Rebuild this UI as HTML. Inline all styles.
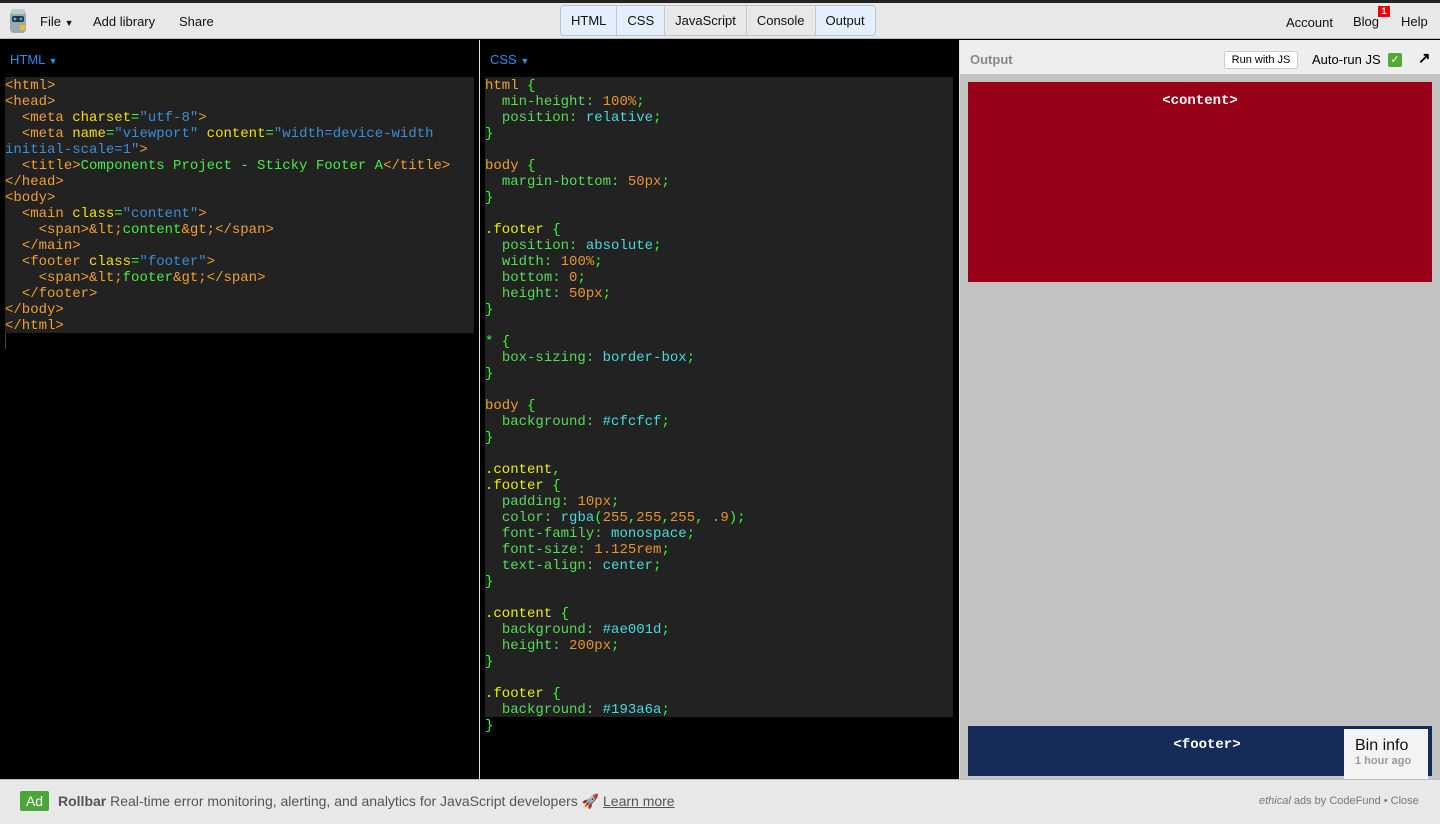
<!DOCTYPE html>
<html><head><meta charset="utf-8">
<style>
*{box-sizing:border-box;margin:0;padding:0}
body{width:1440px;height:824px;overflow:hidden;background:#000;font-family:"Liberation Sans",sans-serif;position:relative}
.top{position:absolute;left:0;top:0;width:1440px;height:3px;background:#222}
.bar{position:absolute;left:0;top:3px;width:1440px;height:36px;background:#e8e8e8;border-bottom:1px solid #bbb;font-size:13px;color:#111}
.bar span{position:absolute;top:11px}
.tabs{position:absolute;left:560px;top:2px;height:31px;display:flex;border:1px solid #bcc4d0;border-radius:4px;overflow:hidden;background:#e8e8e8}
.tabs div{padding:0 10px;line-height:30px;border-right:1px solid #c8c8c8;font-size:13px}
.tabs div.on{background:#e4eefc}
.tabs div:last-child{border-right:none}
.panel{position:absolute;top:40px;height:739px;background:#000}
.lbl{position:absolute;left:10px;top:12px;color:#2d8ef0;font-size:13px}
.code{position:absolute;left:5px;top:37px;background:#222;font-family:"Liberation Mono",monospace;font-size:14px;line-height:16px;white-space:pre;padding-top:1px;color:#4e4}
.t{color:#f0a030}.a{color:#f2e200}.s{color:#3a8fd5}.x{color:#4e4}
.p{color:#5d5}.v{color:#4dd}.n{color:#e9952c}.sel{color:#ee0}.b{color:#3f3}
.out{position:absolute;left:960px;top:40px;width:480px;height:739px;background:#c3c3c3}
.ohead{position:absolute;left:0;top:0;width:480px;height:34px;background:#eee;font-size:13px}
.ad{position:absolute;left:0;top:779px;width:1440px;height:45px;background:#e8e8e8;border-top:1px solid #bbb;font-size:14px;color:#555}
</style></head><body>
<div class="top"></div>
<div class="bar">
<svg style="position:absolute;left:9px;top:5px" width="18" height="26" viewBox="0 0 18 26"><rect x="1" y="3" width="16" height="22" rx="4" fill="#9aa"/><rect x="2" y="1" width="14" height="5" rx="2" fill="#bcc"/><rect x="3" y="8" width="12" height="6" rx="2" fill="#234"/><circle cx="6" cy="11" r="1.5" fill="#4af"/><circle cx="12" cy="11" r="1.5" fill="#4af"/><rect x="11" y="17" width="5" height="5" fill="#eb3"/></svg>
<span style="left:40px">File <small style="font-size:9px">▼</small></span>
<span style="left:93px">Add library</span>
<span style="left:179px">Share</span>
<div class="tabs"><div class="on">HTML</div><div class="on">CSS</div><div>JavaScript</div><div>Console</div><div class="on">Output</div></div>
<span style="left:1286px;top:12px">Account</span>
<span style="left:1353px">Blog</span>
<div style="position:absolute;left:1378px;top:3px;width:12px;height:11px;background:#e00;color:#fff;font-size:9px;font-weight:bold;text-align:center;line-height:11px">1</div>
<span style="left:1401px">Help</span>
</div>

<div class="panel" style="left:0;width:479px">
<div class="lbl">HTML <small style="font-size:9px">▼</small></div>
<div class="code" style="width:469px;height:256px"><span class="t">&lt;html&gt;</span>
<span class="t">&lt;head&gt;</span>
  <span class="t">&lt;meta</span> <span class="a">charset</span><span class="x">=</span><span class="s">"utf-8"</span><span class="t">&gt;</span>
  <span class="t">&lt;meta</span> <span class="a">name</span><span class="x">=</span><span class="s">"viewport"</span> <span class="a">content</span><span class="x">=</span><span class="s">"width=device-width</span>
<span class="s">initial-scale=1"</span><span class="t">&gt;</span>
  <span class="t">&lt;title&gt;</span>Components Project - Sticky Footer A<span class="t">&lt;/title&gt;</span>
<span class="t">&lt;/head&gt;</span>
<span class="t">&lt;body&gt;</span>
  <span class="t">&lt;main</span> <span class="a">class</span><span class="x">=</span><span class="s">"content"</span><span class="t">&gt;</span>
    <span class="t">&lt;span&gt;</span><span class="t">&amp;lt;</span>content<span class="t">&amp;gt;</span><span class="t">&lt;/span&gt;</span>
  <span class="t">&lt;/main&gt;</span>
  <span class="t">&lt;footer</span> <span class="a">class</span><span class="x">=</span><span class="s">"footer"</span><span class="t">&gt;</span>
    <span class="t">&lt;span&gt;</span><span class="t">&amp;lt;</span>footer<span class="t">&amp;gt;</span><span class="t">&lt;/span&gt;</span>
  <span class="t">&lt;/footer&gt;</span>
<span class="t">&lt;/body&gt;</span>
<span class="t">&lt;/html&gt;</span></div>
<div style="position:absolute;left:5px;top:293px;width:1px;height:16px;background:#444"></div>
</div>
<div style="position:absolute;left:479px;top:40px;width:1px;height:739px;background:#ddd"></div>
<div class="panel" style="left:480px;width:479px">
<div class="lbl">CSS <small style="font-size:9px">▼</small></div>
<div class="code" style="width:468px;height:640px"><span class="t">html</span> <span class="b">{</span>
  <span class="p">min-height:</span> <span class="n">100%</span><span class="b">;</span>
  <span class="p">position:</span> <span class="v">relative</span><span class="b">;</span>
<span class="b">}</span>

<span class="t">body</span> <span class="b">{</span>
  <span class="p">margin-bottom:</span> <span class="n">50px</span><span class="b">;</span>
<span class="b">}</span>

<span class="sel">.footer</span> <span class="b">{</span>
  <span class="p">position:</span> <span class="v">absolute</span><span class="b">;</span>
  <span class="p">width:</span> <span class="n">100%</span><span class="b">;</span>
  <span class="p">bottom:</span> <span class="n">0</span><span class="b">;</span>
  <span class="p">height:</span> <span class="n">50px</span><span class="b">;</span>
<span class="b">}</span>

<span class="b">* {</span>
  <span class="p">box-sizing:</span> <span class="v">border-box</span><span class="b">;</span>
<span class="b">}</span>

<span class="t">body</span> <span class="b">{</span>
  <span class="p">background:</span> <span class="v">#cfcfcf</span><span class="b">;</span>
<span class="b">}</span>

<span class="sel">.content</span><span class="b">,</span>
<span class="sel">.footer</span> <span class="b">{</span>
  <span class="p">padding:</span> <span class="n">10px</span><span class="b">;</span>
  <span class="p">color:</span> <span class="v">rgba</span><span class="b">(</span><span class="n">255</span><span class="b">,</span><span class="n">255</span><span class="b">,</span><span class="n">255</span><span class="b">,</span> <span class="n">.9</span><span class="b">);</span>
  <span class="p">font-family:</span> <span class="v">monospace</span><span class="b">;</span>
  <span class="p">font-size:</span> <span class="n">1.125rem</span><span class="b">;</span>
  <span class="p">text-align:</span> <span class="v">center</span><span class="b">;</span>
<span class="b">}</span>

<span class="sel">.content</span> <span class="b">{</span>
  <span class="p">background:</span> <span class="v">#ae001d</span><span class="b">;</span>
  <span class="p">height:</span> <span class="n">200px</span><span class="b">;</span>
<span class="b">}</span>

<span class="sel">.footer</span> <span class="b">{</span>
  <span class="p">background:</span> <span class="v">#193a6a</span><span class="b">;</span>
<span class="b">}</span></div>
</div>
<div style="position:absolute;left:959px;top:40px;width:1px;height:739px;background:#ddd"></div>

<div class="out">
<div class="ohead">
<span style="position:absolute;left:10px;top:12px;color:#888;font-weight:bold">Output</span>
<div style="position:absolute;left:264px;top:11px;width:74px;height:18px;border:1px solid #ccc;border-radius:3px;background:#fff;font-size:11px;text-align:center;line-height:16px">Run with JS</div>
<span style="position:absolute;left:352px;top:12px;font-size:13px">Auto-run JS</span>
<div style="position:absolute;left:428px;top:13px;width:14px;height:14px;background:#5a3;border-radius:2px;color:#fff;font-size:11px;text-align:center;line-height:14px">✓</div>
<span style="position:absolute;left:458px;top:9px;font-size:15px;font-weight:bold">↗</span>
</div>
<div style="position:absolute;left:8px;top:42px;width:464px;height:200px;background:#970017;color:#fff;font-family:'Liberation Mono',monospace;font-size:14px;font-weight:bold;text-align:center;padding-top:11px">&lt;content&gt;</div>
<div style="position:absolute;left:8px;top:686px;width:464px;height:50px;background:#162c58;color:#fff;font-family:'Liberation Mono',monospace;font-size:14px;font-weight:bold;text-align:center;padding-top:11px;padding-left:14px">&lt;footer&gt;</div>
<div style="position:absolute;left:384px;top:689px;width:84px;height:50px;background:#f3f3f3;padding:8px 0 0 11px"><div style="font-size:16px;color:#111">Bin info</div><div style="font-size:11px;color:#999;font-weight:bold">1 hour ago</div></div>
</div>

<div class="ad">
<div style="position:absolute;left:20px;top:11px;width:29px;height:20px;background:#4aa53a;border-radius:2px;color:#fff;font-size:14px;text-align:center;line-height:20px">Ad</div>
<span style="position:absolute;left:58px;top:13px;white-space:nowrap"><b style="color:#555">Rollbar</b> Real-time error monitoring, alerting, and analytics for JavaScript developers 🚀 <u>Learn more</u></span>
<span style="position:absolute;left:1259px;top:15px;font-size:11px;color:#777"><i>ethical</i> ads by CodeFund • Close</span>
</div>
</body></html>
